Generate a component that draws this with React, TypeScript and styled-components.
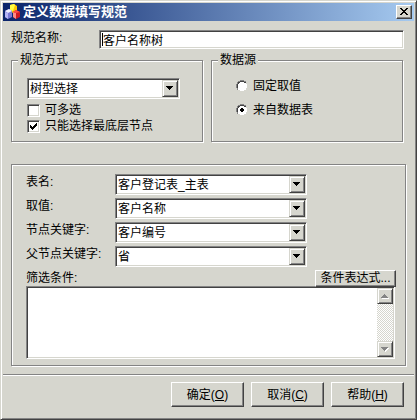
import React from "react";
import styled, { createGlobalStyle, css } from "styled-components";

const face = "#d6d6ce";
const shade = "#848484";
const dark = "#424242";

const Global = createGlobalStyle`
  * { box-sizing: border-box; }
  body { margin: 0; background: ${face}; }
  body, button, input, select, textarea {
    font: 12px/16px "Liberation Sans", "Noto Sans CJK SC", sans-serif;
    color: #000;
  }
`;

const sunken = css`
  border: 1px solid;
  border-color: ${shade} #fff #fff ${shade};
  box-shadow: inset 1px 1px ${dark}, inset -1px -1px ${face};
`;

const raised = css`
  border: 1px solid;
  border-color: #fff ${dark} ${dark} #fff;
  box-shadow: inset -1px -1px ${shade};
  background: ${face};
`;

const etched = css`
  border: 1px solid ${shade};
  box-shadow: 1px 1px #fff, inset 1px 1px #fff;
`;

const Dialog = styled.form`
  display: flex;
  flex-direction: column;
  min-height: 100vh;
  padding: 2px;
  border: 1px solid;
  border-color: ${face} ${dark} ${dark} ${face};
  box-shadow: inset 1px 1px #fff, inset -1px -1px ${shade};
  background: ${face};
`;

const TitleBar = styled.header`
  display: flex;
  align-items: center;
  gap: 3px;
  height: 18px;
  padding: 0 2px 0 1px;
  background: linear-gradient(90deg, #0a246a, #a6caf0);
`;

const Title = styled.h1`
  flex: 1;
  margin: 0;
  font-size: 13px;
  line-height: 18px;
  font-weight: bold;
  color: #fff;
`;

const CloseButton = styled.button`
  ${raised}
  display: grid;
  place-items: center;
  width: 16px;
  height: 14px;
  padding: 0 1px 1px 0;
`;

const Content = styled.main`
  display: flex;
  flex-direction: column;
  padding: 9px 7px 8px 8px;
`;

const NameRow = styled.div`
  display: grid;
  grid-template-columns: 88px 1fr;
  margin-right: 3px;
`;

const TextInput = styled.input`
  ${sunken}
  width: 100%;
  min-width: 0;
  height: 19px;
  padding: 0 3px 1px;
  border-radius: 0;
  outline: none;
  background: linear-gradient(#000, #000) 2px 2px / 1px 13px no-repeat #fff;
`;

const Groups = styled.div`
  display: grid;
  grid-template-columns: 1fr 1fr;
  gap: 8px;
  margin: 4px 4px 0 0;
`;

const Group = styled.fieldset`
  ${etched}
  min-width: 0;
  height: 89px;
  margin: 0;
  padding: 10px 22px 0 15px;
`;

const Legend = styled.legend`
  margin-left: -9px;
  padding: 0 2px;
  line-height: 15px;
  background: ${face};
`;

const Options = styled.div<{ $spaced?: boolean }>`
  display: grid;
  gap: ${(p) => (p.$spaced ? "8px" : "0")};
  padding: ${(p) => (p.$spaced ? "0 0 0 9px" : "3px 0 0")};
`;

const Option = styled.label`
  display: flex;
  align-items: center;
  gap: 5px;
  white-space: nowrap;
`;

const Mark = styled.span`
  display: grid;
  & > * { grid-area: 1 / 1; }
  & > svg { pointer-events: none; place-self: center; }
  & > input:not(:checked) + svg.tick { visibility: hidden; }
  & > input:not(:checked) + svg .dot { visibility: hidden; }
`;

const CheckInput = styled.input`
  ${sunken}
  appearance: none;
  width: 13px;
  height: 13px;
  margin: 0;
  background: #fff;
`;

const RadioInput = styled.input`
  appearance: none;
  width: 12px;
  height: 12px;
  margin: 0;
`;

const SelectFrame = styled.span`
  ${sunken}
  display: grid;
  height: 21px;
  padding: 1px;
  background: #fff;
  & > * { grid-area: 1 / 1; }
`;

const NativeSelect = styled.select`
  appearance: none;
  width: 100%;
  height: 17px;
  padding: 0 18px 0 1px;
  border: 0;
  border-radius: 0;
  outline: none;
  background: #fff;
`;

const ArrowFace = styled.span`
  display: grid;
  place-items: center;
  justify-self: end;
  width: 16px;
  height: 17px;
  border: 1px solid;
  border-color: ${face} ${dark} ${dark} ${face};
  box-shadow: inset 1px 1px #fff, inset -1px -1px ${shade};
  background: ${face};
  pointer-events: none;
`;

const SourcePanel = styled.section`
  ${etched}
  margin: 22px 1px 0 0;
  padding: 9px 10px 6px 14px;
`;

const Fields = styled.div`
  display: grid;
  grid-template-columns: 89px minmax(0, 192px);
  row-gap: 3px;
`;

const FilterHead = styled.div`
  display: flex;
  justify-content: space-between;
  align-items: flex-start;
  height: 16px;
  margin-top: 3px;
`;

const ExpressionButton = styled.button`
  ${raised}
  height: 17px;
  width: 81px;
  margin-right: -1px;
  padding: 0;
  line-height: 15px;
  white-space: nowrap;
`;

const FilterBox = styled.div`
  ${sunken}
  display: flex;
  height: 73px;
  padding: 1px;
  background: #fff;
`;

const FilterText = styled.textarea`
  flex: 1;
  min-width: 0;
  margin: 0;
  padding: 1px 2px;
  border: 0;
  outline: none;
  resize: none;
  overflow: hidden;
  background: transparent;
`;

const ScrollTrack = styled.div`
  display: flex;
  flex-direction: column;
  justify-content: space-between;
  width: 16px;
  background: repeating-conic-gradient(${face} 0 25%, #fff 0 50%) 0 0 / 2px 2px;
`;

const ScrollButton = styled.button`
  display: grid;
  place-items: center;
  width: 16px;
  height: 16px;
  padding: 0;
  border: 1px solid;
  border-color: ${face} ${dark} ${dark} ${face};
  box-shadow: inset 1px 1px #fff, inset -1px -1px ${shade};
  background: ${face};
`;

const Footer = styled.footer`
  display: flex;
  justify-content: flex-end;
  gap: 7px;
  padding: 7px 10px 10px;
  border-top: 1px solid ${shade};
  box-shadow: inset 0 1px #fff;
`;

const FooterButton = styled.button`
  ${raised}
  width: 73px;
  height: 25px;
  padding: 0;
  white-space: nowrap;
`;

const Logo = () => (
  <svg width="16" height="16" viewBox="0 0 16 16" aria-hidden="true">
    <path d="M6 1l4-1 3 2v5l-4 2-3-2z" fill="#ffc600" />
    <path d="M6 1l4-1 1 1-2 6-3-1z" fill="#ffff42" />
    <path d="M1 7l4-2 3 2v6l-4 2-3-2z" fill="#7b7bd6" />
    <path d="M1 7l4-2 3 2-4 2z" fill="#efefff" />
    <path d="M1 8l3 1v6l-3-2z" fill="#b5b5f7" />
    <path d="M9 8l3-2 4 2v5l-4 2-3-2z" fill="#ce1821" />
    <path d="M9 8l3 1v6l-3-2z" fill="#ff8c84" />
    <path d="M9 8l3-2 4 2-4 1z" fill="#ff4a42" />
  </svg>
);

const Triangle = ({ up, muted }: { up?: boolean; muted?: boolean }) => {
  const d = up ? "M3 0h1v1h1v1h1v1h1v1H0V3h1V2h1V1h1z" : "M0 0h7v1H6v1H5v1H4v1H3V3H2V2H1V1H0z";
  return (
    <svg width="8" height="5" viewBox="0 0 8 5" shapeRendering="crispEdges" aria-hidden="true">
      {muted && <path d={d} fill="#fff" transform="translate(1 1)" />}
      <path d={d} fill={muted ? shade : "#000"} />
    </svg>
  );
};

const Select = ({ id, value, label }: { id: string; value: string; label?: string }) => (
  <SelectFrame>
    <NativeSelect id={id} aria-label={label} defaultValue={value}>
      <option>{value}</option>
    </NativeSelect>
    <ArrowFace>
      <Triangle />
    </ArrowFace>
  </SelectFrame>
);

const Check = ({ label, checked }: { label: string; checked?: boolean }) => (
  <Option>
    <Mark>
      <CheckInput type="checkbox" defaultChecked={checked} />
      <svg className="tick" width="7" height="7" viewBox="0 0 7 7" shapeRendering="crispEdges">
        <path d="M0 2h1v1h1v1h1V3h1V2h1V1h1V0h1v3H6v1H5v1H4v1H3v1H2V6H1V5H0z" />
      </svg>
    </Mark>
    {label}
  </Option>
);

const Radio = ({ label, checked }: { label: string; checked?: boolean }) => (
  <Option>
    <Mark>
      <RadioInput type="radio" name="source" defaultChecked={checked} />
      <svg width="12" height="12" viewBox="0 0 12 12" shapeRendering="crispEdges">
        <path d="M4 1h4v1h2v2h1v4h-1v2H8v1H4v-1H2V8H1V4h1V2h2z" fill="#fff" />
        <path d="M4 0h4v1h2v1H8V1H4v1H2v2H1v4h1v2H1V8H0V4h1V2h1V1h2z" fill={shade} />
        <path d="M4 1h4v1H4v1H3v1H2v4H1V4h1V2h2zM8 2h2v1H8z" fill={dark} />
        <path className="dot" d="M5 4h2v1h1v2H7v1H5V7H4V5h1z" fill="#000" />
      </svg>
    </Mark>
    {label}
  </Option>
);

const fields = [
  { id: "table", label: "表名:", value: "客户登记表_主表" },
  { id: "value", label: "取值:", value: "客户名称" },
  { id: "node-key", label: "节点关键字:", value: "客户编号" },
  { id: "parent-key", label: "父节点关键字:", value: "省" },
];

const actions = [
  { text: "确定", hotkey: "O" },
  { text: "取消", hotkey: "C" },
  { text: "帮助", hotkey: "H" },
];

export default function App() {
  return (
    <>
      <Global />
      <Dialog onSubmit={(e) => e.preventDefault()}>
        <TitleBar>
          <Logo />
          <Title>定义数据填写规范</Title>
          <CloseButton type="button" aria-label="关闭">
            <svg width="8" height="7" viewBox="0 0 8 7" shapeRendering="crispEdges">
              <path d="M0 0h2v1h1v1h2V1h1V0h2v1H7v1H6v1H5v1h1v1h1v1h1v1H6V6H5V5H3v1H2v1H0V6h1V5h1V4h1V3H2V2H1V1H0z" />
            </svg>
          </CloseButton>
        </TitleBar>
        <Content>
          <NameRow>
            <label htmlFor="rule-name">规范名称:</label>
            <TextInput id="rule-name" defaultValue="客户名称树" />
          </NameRow>
          <Groups>
            <Group>
              <Legend>规范方式</Legend>
              <Select id="mode" label="规范方式" value="树型选择" />
              <Options>
                <Check label="可多选" />
                <Check label="只能选择最底层节点" checked />
              </Options>
            </Group>
            <Group>
              <Legend>数据源</Legend>
              <Options $spaced>
                <Radio label="固定取值" />
                <Radio label="来自数据表" checked />
              </Options>
            </Group>
          </Groups>
          <SourcePanel>
            <Fields>
              {fields.map((f) => (
                <React.Fragment key={f.id}>
                  <label htmlFor={f.id}>{f.label}</label>
                  <Select id={f.id} value={f.value} />
                </React.Fragment>
              ))}
            </Fields>
            <FilterHead>
              <label htmlFor="filter">筛选条件:</label>
              <ExpressionButton type="button">条件表达式...</ExpressionButton>
            </FilterHead>
            <FilterBox>
              <FilterText id="filter" />
              <ScrollTrack>
                <ScrollButton type="button" aria-label="向上滚动">
                  <Triangle up muted />
                </ScrollButton>
                <ScrollButton type="button" aria-label="向下滚动">
                  <Triangle muted />
                </ScrollButton>
              </ScrollTrack>
            </FilterBox>
          </SourcePanel>
        </Content>
        <Footer>
          {actions.map((a) => (
            <FooterButton key={a.hotkey} type="button">
              {a.text}(<u>{a.hotkey}</u>)
            </FooterButton>
          ))}
        </Footer>
      </Dialog>
    </>
  );
}
